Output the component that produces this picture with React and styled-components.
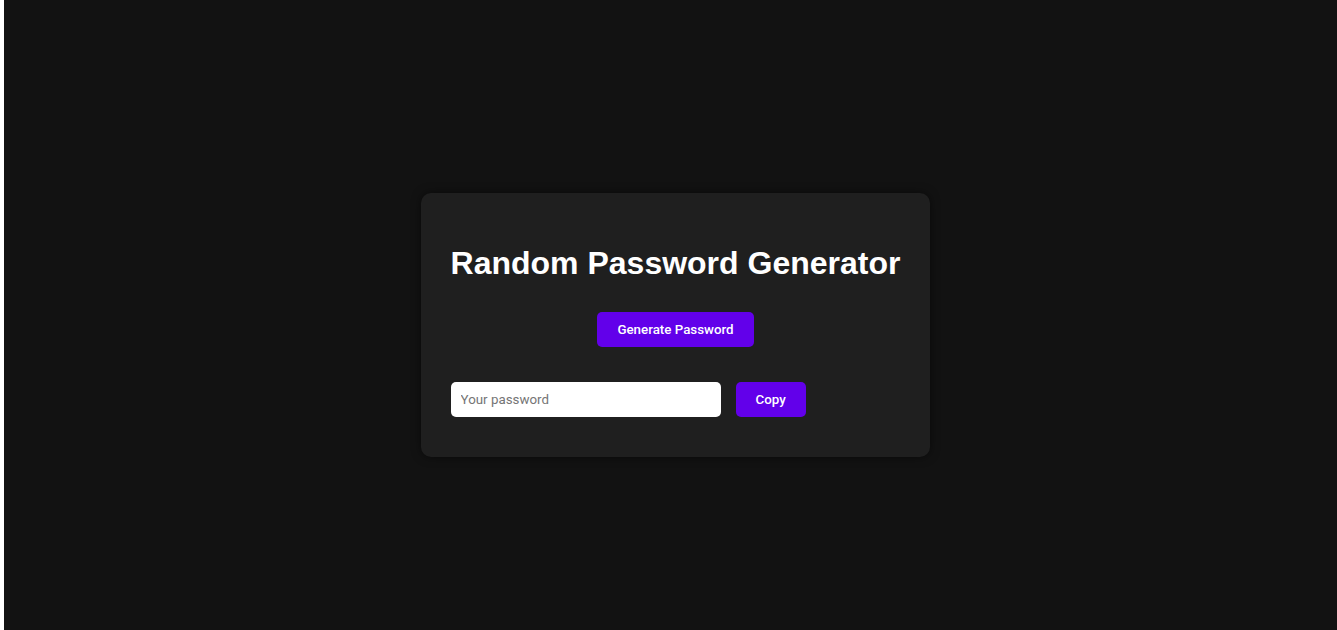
import React, { useState } from 'react'
import styled, { createGlobalStyle } from 'styled-components'

const GlobalStyle = createGlobalStyle`
body {
  margin: 0;
  background: #ffffff;
  font-family: Roboto, "Liberation Sans", Arial, sans-serif;
}
`

const Page = styled.div`
margin-left: 4px;
height: 630px;
box-sizing: border-box;
padding: 20px 0 0 10px;
background: #121212;
display: flex;
align-items: center;
justify-content: center;
`

const Card = styled.div`
background: #1f1f1f;
border-radius: 10px;
padding: 30px;
box-shadow: 0 0 10px rgba(0, 0, 0, 0.5);
display: flex;
flex-direction: column;
`

const Title = styled.h1`
margin: 22px 0 0;
font-family: "Liberation Sans", Arial, sans-serif;
font-size: 32px;
font-weight: 700;
line-height: 37px;
color: #ffffff;
text-align: center;
white-space: nowrap;
`

const Button = styled.button`
align-self: ${p => (p.$center ? 'center' : 'auto')};
margin-top: ${p => p.$top || 0}px;
height: 35px;
padding: 0 20px;
border: none;
border-radius: 5px;
background: #6200ea;
color: #ffffff;
font-family: Roboto, "Liberation Sans", Arial, sans-serif;
font-size: 13.333px;
font-weight: 500;
cursor: pointer;
`

const Row = styled.div`
display: flex;
align-items: center;
gap: 15px;
margin: 35px 0 10px;
`

const Input = styled.input`
width: 270px;
height: 35px;
box-sizing: border-box;
padding: 0 10px;
border: none;
border-radius: 5px;
background: #ffffff;
color: #222;
font-family: Roboto, "Liberation Sans", Arial, sans-serif;
font-size: 13.333px;
outline: none;

&::placeholder {
  color: #757575;
}
`

const chars = 'ABCDEFGHIJKLMNOPQRSTUVWXYZabcdefghijklmnopqrstuvwxyz0123456789!@#$%^&*'

export default function App() {
  const [password, setPassword] = useState('')

  const generate = () => {
    let out = ''
    for (let i = 0; i < 12; i++) out += chars[Math.floor(Math.random() * chars.length)]
    setPassword(out)
  }

  return (
    <>
      <GlobalStyle />
      <Page>
        <Card>
          <Title>Random Password Generator</Title>
          <Button $center $top={30} onClick={generate}>Generate Password</Button>
          <Row>
            <Input
              placeholder="Your password"
              value={password}
              readOnly
            />
            <Button onClick={() => navigator.clipboard && navigator.clipboard.writeText(password)}>
              Copy
            </Button>
          </Row>
        </Card>
      </Page>
    </>
  )
}
